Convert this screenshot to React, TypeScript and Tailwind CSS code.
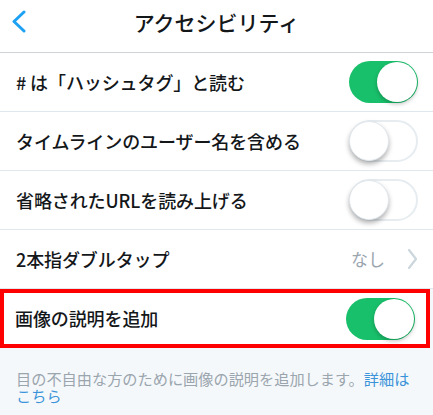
type Row =
  | { label: string; kind: 'toggle'; on: boolean }
  | { label: string; kind: 'value'; value: string };

const ROWS: Row[] = [
  { label: '# は「ハッシュタグ」と読む', kind: 'toggle', on: true },
  { label: 'タイムラインのユーザー名を含める', kind: 'toggle', on: false },
  { label: '省略されたURLを読み上げる', kind: 'toggle', on: false },
  { label: '2本指ダブルタップ', kind: 'value', value: 'なし' },
];

function Toggle({ on }: { on: boolean }) {
  return on ? (
    <div className="w-[69px] h-[42px] rounded-full bg-[#19c06b] flex items-center justify-end pr-[1px]">
      <div className="w-[40px] h-[40px] rounded-full bg-white shadow-[0_2px_4px_rgba(0,0,0,0.25)]" />
    </div>
  ) : (
    <div className="w-[69px] h-[42px] rounded-full bg-white border-2 border-[#e6ecf0] flex items-center justify-start">
      <div className="w-[40px] h-[40px] -ml-[2px] rounded-full bg-white shadow-[0_3px_5px_rgba(0,0,0,0.3)] border border-[#e1e8ed]" />
    </div>
  );
}

export default function App() {
  return (
    <div
      className="w-[433px] h-[415px] bg-[#f5f8fa] overflow-hidden text-[#14171a]"
      style={{ fontFamily: '"Noto Sans CJK JP", "Noto Sans", sans-serif' }}
    >
      <div className="h-[53px] bg-white border-b border-[#cdd3d8] flex items-center relative">
        <svg className="absolute left-[11px] top-[10px]" width="16" height="23" viewBox="0 0 16 23">
          <path d="M13 2 L3 11.5 L13 21" fill="none" stroke="#1da1f2" strokeWidth="3" strokeLinecap="round" strokeLinejoin="round" />
        </svg>
        <h1 className="w-full text-center text-[21px] font-medium -mt-[8px] leading-none">アクセシビリティ</h1>
      </div>

      {ROWS.map((row) => (
        <div key={row.label} className="h-[59px] bg-white border-b border-[#e1e8ed] flex items-center justify-between pl-[16px] pr-[15px]">
          <span className="text-[18px] font-medium tracking-[-0.1px]">{row.label}</span>
          {row.kind === 'toggle' ? (
            <Toggle on={row.on} />
          ) : (
            <div className="flex items-center gap-[22px]">
              <span className="text-[17px] text-[#9aa5ae]">{row.value}</span>
              <svg width="11" height="22" viewBox="0 0 11 22">
                <path d="M2 2 L9 11 L2 20" fill="none" stroke="#ccd6dd" strokeWidth="2.2" strokeLinecap="round" strokeLinejoin="round" />
              </svg>
            </div>
          )}
        </div>
      ))}

      <div className="h-[59px] w-[430px] bg-white border-[4px] border-[#ff0000] flex items-center justify-between pl-[11px] pr-[11px]">
        <span className="text-[18px] font-medium tracking-[-0.1px]">画像の説明を追加</span>
        <Toggle on />
      </div>

      <p className="px-[16px] pt-[22px] text-[15.2px] leading-[17px] text-[#9aa5ae]">
        目の不自由な方のために画像の説明を追加します。<span className="text-[#3b94d9]">詳細はこちら</span>
      </p>
    </div>
  );
}
